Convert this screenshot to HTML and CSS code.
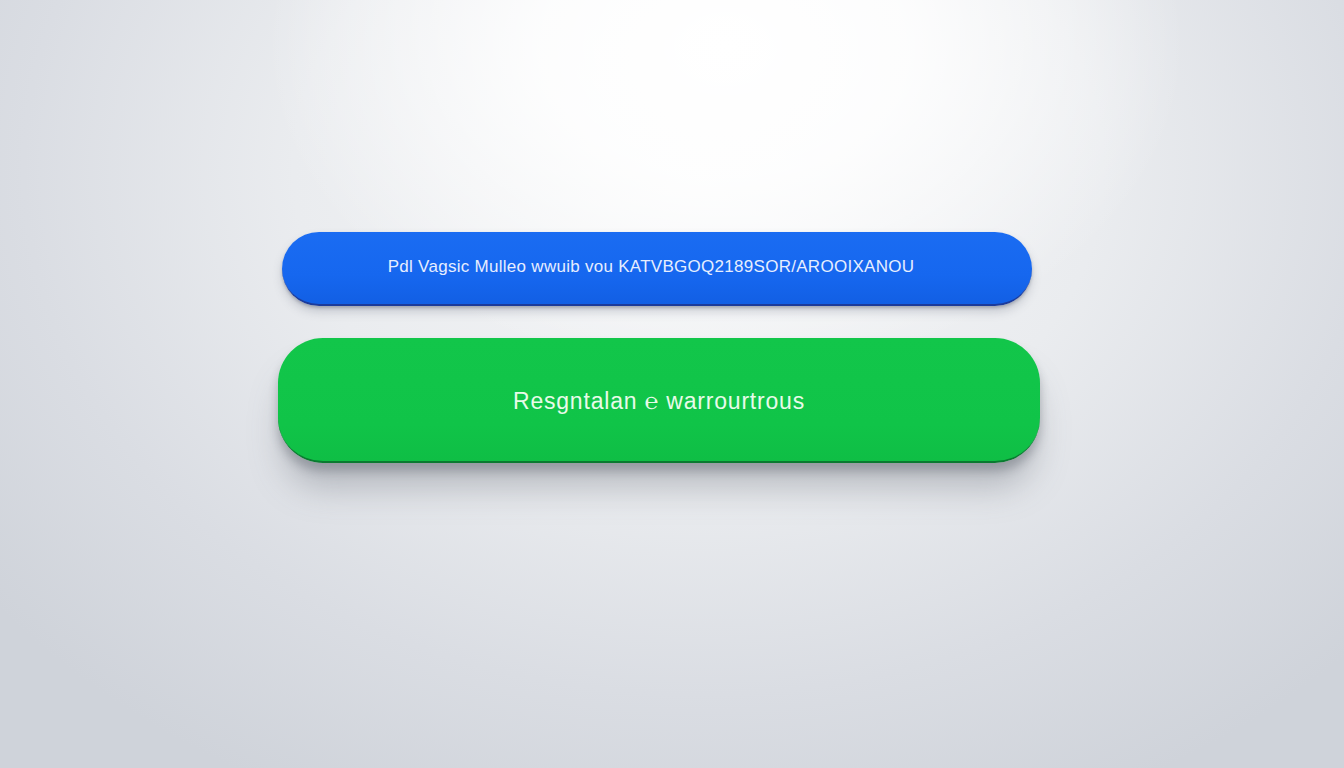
FILE: index.html
```html
<!DOCTYPE html>
<html>
<head>
<meta charset="utf-8">
<link rel="stylesheet" href="styles.css">
</head>
<body>
<main class="stage">
  <div class="stack">
    <div class="bar bar-blue"><span class="bar-label small">Pdl Vagsic Mulleo wwuib vou KATVBGOQ2189SOR/AROOIXANOU</span></div>
    <div class="bar bar-green"><span class="bar-label large">Resgntalan ℮ warrourtrous</span></div>
  </div>
</main>
</body>
</html>
```
FILE: styles.css
```css
html, body {
  margin: 0;
  padding: 0;
}
body {
  width: 1344px;
  height: 768px;
  overflow: hidden;
  font-family: "Liberation Sans", Arial, sans-serif;
  background:
    radial-gradient(ellipse 460px 330px at 54% 6%, rgba(255,255,255,1) 0%, rgba(255,255,255,0.85) 40%, rgba(255,255,255,0) 100%),
    radial-gradient(ellipse 900px 700px at 52% 22%, #f6f7f8 0%, #eaecef 45%, #dadde3 75%, #cfd3da 100%);
}
.stage {
  height: 100%;
  display: flex;
  flex-direction: column;
  padding-top: 232px;
  box-sizing: border-box;
}
.stack {
  display: flex;
  flex-direction: column;
  gap: 32px;
  margin-left: 278px;
  width: 762px;
}
.bar {
  display: flex;
  align-items: center;
  justify-content: center;
  box-sizing: border-box;
}
.bar-blue {
  width: 750px;
  height: 74px;
  margin-left: 4px;
  border-radius: 37px;
  background: linear-gradient(180deg, #1a6cf2 0%, #1667ef 60%, #125fe4 100%);
  border-bottom: 2px solid #1c3b9a;
  box-shadow: 0 6px 10px rgba(90,100,120,0.25), 0 2px 3px rgba(60,70,90,0.3);
}
.bar-green {
  width: 762px;
  height: 125px;
  border-radius: 45px;
  background: linear-gradient(180deg, #12c64a 0%, #10c448 70%, #0fbe45 100%);
  border-bottom: 2px solid #0a7a30;
  box-shadow: 0 30px 34px -6px rgba(90,95,105,0.35), 0 8px 10px rgba(60,65,75,0.3);
}
.bar-label {
  color: #e6eeff;
  white-space: nowrap;
}
.bar-label.small {
  font-size: 17px;
  letter-spacing: 0.28px;
  margin-left: -12px;
  margin-top: -2px;
}
.bar-label.large {
  font-size: 23px;
  letter-spacing: 0.8px;
  color: #e8fbe9;
  margin-top: 3px;
}
```
